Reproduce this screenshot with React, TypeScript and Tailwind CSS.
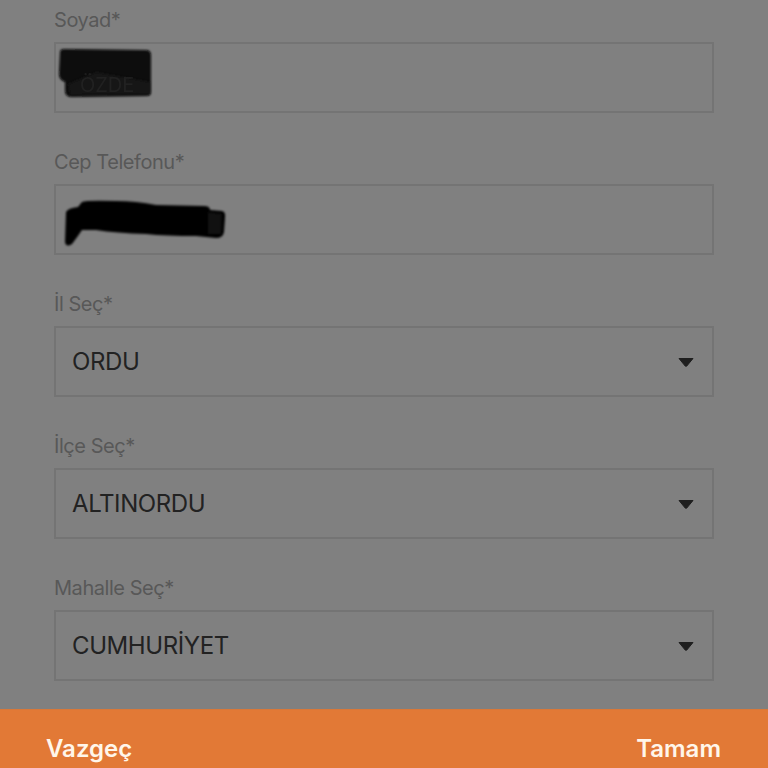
import React from "react";

const font = { fontFamily: "Inter, 'Liberation Sans', sans-serif" };

function Caret() {
  return (
    <svg width="16" height="10" viewBox="0 0 16 10" className="shrink-0">
      <path d="M1 1.5 L15 1.5 L8.8 9 Q8 9.8 7.2 9 Z" fill="#1f1f1f" stroke="#1f1f1f" strokeWidth="1" strokeLinejoin="round" />
    </svg>
  );
}

function Blob1() {
  return (
    <svg className="absolute left-0 top-0" width="120" height="70" viewBox="0 0 120 70">
      <defs>
        <filter id="b1" x="-10%" y="-10%" width="120%" height="120%">
          <feGaussianBlur stdDeviation="1.2" />
        </filter>
      </defs>
      <path
        d="M4 8 Q4 5 8 5 L90 6 Q95 6 95 11 L95 48 Q95 52 91 52 L16 53 Q9 53 9 47 L9 38 Q3 36 3 30 Z"
        fill="#080808"
        filter="url(#b1)"
      />
      <path d="M40 28 L94 38 L94 50 L14 51 L12 40 Z" fill="#1c1c1c" opacity="0.6" filter="url(#b1)" />
      <text x="24" y="48" fontSize="20" fill="#2a2a2a" opacity="0.55" style={font}>ÖZDE</text>
    </svg>
  );
}

function Blob2() {
  return (
    <svg className="absolute left-0 top-0" width="200" height="70" viewBox="0 0 200 70">
      <defs>
        <filter id="b2" x="-10%" y="-10%" width="120%" height="120%">
          <feGaussianBlur stdDeviation="1.3" />
        </filter>
      </defs>
      <path
        d="M10 26 Q12 22 22 21 L26 16 Q30 14 60 15 Q80 15 100 19 L148 20 Q154 20 154 24 L166 25 Q170 26 169 32 L168 46 Q167 52 160 52 L140 50 Q110 50 90 48 Q60 47 40 44 L26 44 Q22 50 16 58 Q10 62 9 56 Z"
        fill="#050505"
        filter="url(#b2)"
      />
      <path d="M152 26 L166 28 L165 48 L152 48 Z" fill="#202020" opacity="0.5" filter="url(#b2)" />
    </svg>
  );
}

function Field({
  label,
  value,
  select,
  blob,
}: {
  label: string;
  value?: string;
  select?: boolean;
  blob?: React.ReactNode;
}) {
  return (
    <div className="flex flex-col">
      <div className="text-[20px] leading-[24px] tracking-[-0.45px] text-[#585858] mb-[10px]" style={font}>
        {label}
      </div>
      <div className="relative h-[71px] border-2 border-[#747474] flex items-center pl-[16px] pr-[18px]">
        {value && (
          <span className="flex-1 text-[24px] tracking-[-0.4px] text-[#222222]" style={font}>
            {value}
          </span>
        )}
        {!value && <span className="flex-1" />}
        {select && <Caret />}
        {blob}
      </div>
    </div>
  );
}

export default function App() {
  return (
    <div className="w-[768px] h-[768px] bg-[#808080] flex flex-col overflow-hidden">
      <div className="flex-1 flex flex-col px-[54px] pt-[8px]">
        <div className="w-[660px] flex flex-col gap-[37px]">
          <Field label="Soyad*" blob={<Blob1 />} />
          <Field label="Cep Telefonu*" blob={<Blob2 />} />
          <Field label="İl Seç*" value="ORDU" select />
          <Field label="İlçe Seç*" value="ALTINORDU" select />
          <Field label="Mahalle Seç*" value="CUMHURİYET" select />
        </div>
      </div>
      <div className="h-[59px] bg-[#e27936] flex items-start justify-between px-[46px] pt-[25px] border-t border-[#d97838]">
        <span className="text-[24px] font-semibold text-[#fff6ea] leading-[28px]" style={font}>
          Vazgeç
        </span>
        <span className="text-[24px] font-semibold text-[#fff6ea] leading-[28px] mr-[1px]" style={font}>
          Tamam
        </span>
      </div>
    </div>
  );
}
